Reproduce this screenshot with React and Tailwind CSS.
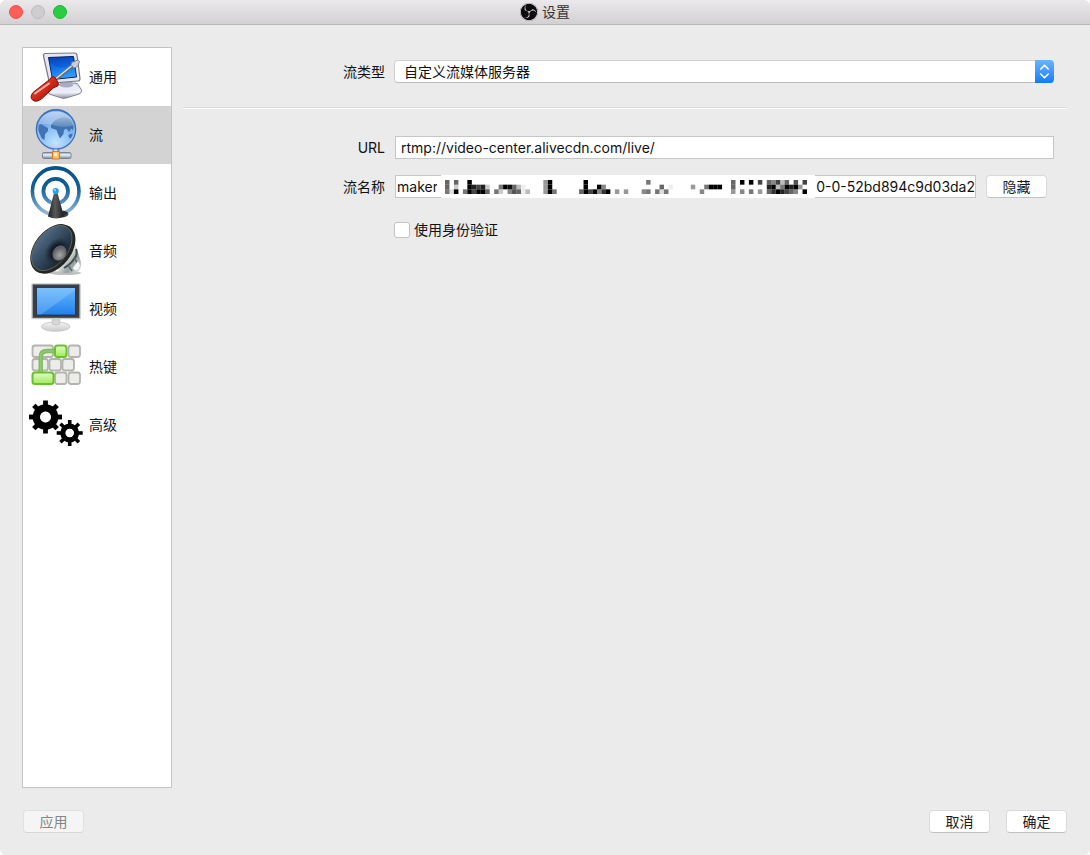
import { useState } from "react";
import { SiObsstudio } from "react-icons/si";

function ComputerIcon() {
  return (
    <svg width="54" height="54" viewBox="0 0 54 54" aria-hidden="true" className="shrink-0">
      <defs>
        <linearGradient id="pcScreen" x1="0" y1="0" x2="0.3" y2="1">
          <stop offset="0" stopColor="#0a3fae" />
          <stop offset="0.5" stopColor="#0b5fdc" />
          <stop offset="1" stopColor="#3ea6ff" />
        </linearGradient>
        <linearGradient id="pcBase" x1="0" y1="0" x2="0" y2="1">
          <stop offset="0" stopColor="#d5d8ea" />
          <stop offset="0.6" stopColor="#f4f5fc" />
          <stop offset="1" stopColor="#8f92a6" />
        </linearGradient>
        <linearGradient id="handle" x1="0" y1="0" x2="1" y2="1">
          <stop offset="0" stopColor="#ff8a76" />
          <stop offset="0.45" stopColor="#d92d1c" />
          <stop offset="1" stopColor="#7d0d06" />
        </linearGradient>
      </defs>
      <path d="M27 35 L46 33 Q49 33 50 36 L52.500 40 Q53 43 50 44 L37 48 Q34 49 31 47.500 L20 44 L19 41 Z" fill="url(#pcBase)" stroke="#83869a" strokeWidth="1" />
      <path d="M27 36.500 L46 35 L50 39.500 L35 43 L23 40 Z" fill="#e9ebf8" />
      <path d="M31 32 L43 31 L44 36 Q37 39 31 36 Z" fill="#a9acbf" />
      <path d="M16 3.500 L45.500 3 Q47.500 3 48 5 L51 28.500 Q51 31 49 31 L23 33 Q20.500 33 20 31 L14.500 6 Q14 4 16 3.500 Z" fill="#e6e7f0" stroke="#77798b" strokeWidth="1.200" />
      <path d="M19.500 7.500 L44.500 6.500 L47.500 27 L23.500 29.500 Z" fill="url(#pcScreen)" stroke="#08215c" strokeWidth="1" />
      <path d="M20.500 12 Q31 22 46 16 L47 26.500 L24 29 Z" fill="#188af5" opacity="0.35" />
      <path d="M27 29 L45 14.500" stroke="#636977" strokeWidth="3.400" />
      <path d="M27 28.500 L45 14" stroke="#dfe3ec" strokeWidth="1.600" />
      <path d="M42 14.500 Q42 11.500 45 11.500 L48.500 10 L50.500 11.500 L49 15.500 Q47 18.500 44.500 18 Z" fill="#c9ced8" stroke="#666b78" strokeWidth="0.800" />
      <path d="M22 27.500 Q24.500 25.500 26.500 28 L29.500 33.500 Q29.500 36.500 26.500 37 Q24 37.500 22 40 L13 48.500 Q7 53 3.500 50 Q0.500 47 4 42.500 L18 31.500 Q21.500 29.500 22 27.500 Z" fill="url(#handle)" stroke="#821006" strokeWidth="1" />
      <path d="M6 43.500 L20 33.500" stroke="#ffd0c8" strokeWidth="2" strokeLinecap="round" opacity="0.8" />
    </svg>
  );
}

function GlobeIcon() {
  return (
    <svg width="54" height="54" viewBox="0 0 54 54" aria-hidden="true" className="shrink-0">
      <defs>
        <radialGradient id="globeSea" cx="0.5" cy="0.85" r="0.9">
          <stop offset="0" stopColor="#c2e5ff" />
          <stop offset="0.45" stopColor="#8bbdf4" />
          <stop offset="1" stopColor="#3a76cf" />
        </radialGradient>
        <linearGradient id="globeGloss" x1="0" y1="0" x2="0" y2="1">
          <stop offset="0" stopColor="#ffffff" stopOpacity="0.65" />
          <stop offset="1" stopColor="#ffffff" stopOpacity="0.15" />
        </linearGradient>
        <linearGradient id="pipe" x1="0" y1="0" x2="0" y2="1">
          <stop offset="0" stopColor="#8995a8" />
          <stop offset="0.4" stopColor="#eef4fb" />
          <stop offset="1" stopColor="#75839a" />
        </linearGradient>
      </defs>
      <rect x="23.500" y="40" width="7" height="6" fill="#8e9bae" />
      <rect x="25" y="40" width="3" height="6" fill="#dfe7f1" />
      <rect x="13.500" y="44.500" width="28.500" height="6" rx="1.500" fill="url(#pipe)" stroke="#6b788d" strokeWidth="0.800" />
      <rect x="23.500" y="43.500" width="7" height="7.500" rx="0.800" fill="#ffc266" stroke="#e07a1c" strokeWidth="1.200" />
      <rect x="25" y="45" width="3" height="3" fill="#ffe9b8" />
      <circle cx="27" cy="21.300" r="19.700" fill="url(#globeSea)" stroke="#3c6db8" strokeWidth="1.200" />
      <path d="M9 16 Q12 15 15 18 L19 20 L19 23 L16 26 L15.500 32 Q12 31 11 26 L8.500 22 Z" fill="#3f74b3" />
      <path d="M22 17 Q26 10 34 9.500 Q42 9.500 44.500 15 Q46 20 44 22 L42.500 20.500 L40 24 L37.500 20.500 L35 22 L34.500 26 L31 30.500 L29 26 L27.500 22 L22 20 Z" fill="#3f74b3" />
      <path d="M39.500 27 Q42 25 44 26 L42 30.500 Q39.500 30.500 39.500 27 Z" fill="#3f74b3" />
      <path d="M9.500 17 Q12 4 27 3.500 Q42 4 45 17 Q36 21 24 17 Q16 15 9.500 17 Z" fill="url(#globeGloss)" />
      <circle cx="27" cy="21.300" r="18" fill="none" stroke="#a7d0fb" strokeWidth="1" opacity="0.6" />
    </svg>
  );
}

function AntennaIcon() {
  return (
    <svg width="54" height="54" viewBox="0 0 54 54" aria-hidden="true" className="shrink-0">
      <defs>
        <linearGradient id="wave" gradientUnits="userSpaceOnUse" x1="0" y1="0" x2="0" y2="50">
          <stop offset="0" stopColor="#07518a" />
          <stop offset="0.45" stopColor="#145f96" />
          <stop offset="1" stopColor="#9fc2dc" />
        </linearGradient>
        <linearGradient id="mast" x1="0" y1="0" x2="1" y2="0">
          <stop offset="0" stopColor="#1d1d1d" />
          <stop offset="0.45" stopColor="#5a5a5a" />
          <stop offset="1" stopColor="#1b1b1b" />
        </linearGradient>
      </defs>
      <circle cx="26.700" cy="25.200" r="23.300" fill="none" stroke="url(#wave)" strokeWidth="3.600" />
      <circle cx="26.700" cy="25.200" r="12.300" fill="none" stroke="url(#wave)" strokeWidth="3.800" />
      <ellipse cx="32" cy="48" rx="7.500" ry="3.500" fill="#000000" opacity="0.75" />
      <path d="M25 27 L28.500 27 L35 50.500 Q27 54.500 19 50.500 Z" fill="url(#mast)" />
      <circle cx="26.700" cy="25" r="3.100" fill="#2b9cf2" />
      <circle cx="26" cy="24.200" r="1.100" fill="#95d3ff" />
    </svg>
  );
}

function SpeakerIcon() {
  return (
    <svg width="54" height="54" viewBox="0 0 54 54" aria-hidden="true" className="shrink-0">
      <defs>
        <linearGradient id="coneFill" x1="0.5" y1="0" x2="0.4" y2="1">
          <stop offset="0" stopColor="#506b83" />
          <stop offset="0.5" stopColor="#33485c" />
          <stop offset="1" stopColor="#1b2632" />
        </linearGradient>
        <radialGradient id="coneDepth">
          <stop offset="0" stopColor="#0b0f16" />
          <stop offset="0.5" stopColor="#0f1620" stopOpacity="0.8" />
          <stop offset="1" stopColor="#1a2633" stopOpacity="0" />
        </radialGradient>
        <linearGradient id="magnet" x1="0" y1="0" x2="1" y2="1">
          <stop offset="0" stopColor="#56605f" />
          <stop offset="0.5" stopColor="#dfe5e5" />
          <stop offset="0.7" stopColor="#939e9e" />
          <stop offset="1" stopColor="#eef1f1" />
        </linearGradient>
        <radialGradient id="dustCap" cx="0.6" cy="0.6">
          <stop offset="0" stopColor="#aaa6a6" />
          <stop offset="1" stopColor="#606268" />
        </radialGradient>
      </defs>
      <ellipse cx="36" cy="49" rx="16" ry="2" fill="#000000" opacity="0.25" />
      <path d="M45 14 L48.500 27 L52 38 Q53 45 48 48 Q42 50 31 48.500 L26 43 Z" fill="url(#magnet)" />
      <path d="M47 25 Q49 31 45 35 Q42 40 35 44" fill="none" stroke="#424c4d" strokeWidth="2" />
      <path d="M39 41 L43 47 M45 34 L50 41" stroke="#59696a" strokeWidth="1.400" />
      <path d="M44 44 L49 37 L51 41 Q50 46 46 46.500 Z" fill="#f5f7f7" />
      <g transform="rotate(-52 24 25)">
        <ellipse cx="24" cy="24.800" rx="28" ry="18.500" fill="#262724" />
        <ellipse cx="24" cy="23.400" rx="25.800" ry="16" fill="url(#coneFill)" stroke="#76736a" strokeWidth="0.700" />
      </g>
      <ellipse cx="28" cy="27" rx="11" ry="15" fill="url(#coneDepth)" transform="rotate(38 28 27)" />
      <ellipse cx="30.500" cy="29" rx="6.500" ry="8" fill="url(#dustCap)" transform="rotate(35 30.500 29)" />
    </svg>
  );
}

function MonitorIcon() {
  return (
    <svg width="54" height="54" viewBox="0 0 54 54" aria-hidden="true" className="shrink-0">
      <defs>
        <linearGradient id="lcd" x1="0" y1="0" x2="0" y2="1">
          <stop offset="0" stopColor="#68b8fb" />
          <stop offset="1" stopColor="#2080ed" />
        </linearGradient>
        <linearGradient id="stand" x1="0" y1="0" x2="0" y2="1">
          <stop offset="0" stopColor="#f6f6f6" />
          <stop offset="1" stopColor="#c9c9c9" />
        </linearGradient>
      </defs>
      <ellipse cx="26.700" cy="44.600" rx="14.300" ry="4.700" fill="url(#stand)" stroke="#c2c2c2" strokeWidth="0.800" />
      <path d="M23 36 L31 36 L31 42 Q27 44.500 23 42 Z" fill="#d6d6d6" stroke="#b9b9b9" strokeWidth="0.500" />
      <rect x="2.300" y="1.300" width="49.500" height="36" rx="1.500" fill="#c9c9c9" />
      <rect x="3.700" y="2.500" width="46.700" height="33.300" fill="#3b3e42" />
      <rect x="7.500" y="5.500" width="39" height="27.500" fill="url(#lcd)" stroke="#19324f" strokeWidth="0.800" />
      <path d="M8 6 H46 V8 L12 32.500 H8 Z" fill="#b3dcff" opacity="0.28" />
    </svg>
  );
}

const GREY_KEYS = [
  [3.5, 5.5, 20.5],
  [39.5, 5.5, 11.5],
  [3.5, 19, 15.5],
  [20.5, 19, 11.5],
  [33.5, 19, 11.5],
  [26, 32.5, 11.5],
  [39.5, 32.5, 11.5],
];

function KeysIcon() {
  return (
    <svg width="54" height="54" viewBox="0 0 54 54" aria-hidden="true" className="shrink-0">
      <defs>
        <linearGradient id="greenKey" x1="0" y1="0" x2="0" y2="1">
          <stop offset="0" stopColor="#e2fbc8" />
          <stop offset="1" stopColor="#a0ea5c" />
        </linearGradient>
      </defs>
      {GREY_KEYS.map(([x, y, w]) => (
        <rect key={`${x}-${y}`} x={x} y={y} width={w} height="11.500" rx="2.500" fill="#ececea" stroke="#b3b4b0" strokeWidth="1.800" />
      ))}
      <path d="M11.700 32 V17 Q11.700 11 18 11 H26" fill="none" stroke="#7fbd58" strokeWidth="4.400" />
      <path d="M11.700 32 V17 Q11.700 11 18 11 H26" fill="none" stroke="#94c878" strokeWidth="1.600" />
      <rect x="26" y="5.500" width="11.500" height="11.500" rx="2.500" fill="url(#greenKey)" stroke="#6cc02e" strokeWidth="2" />
      <rect x="3.500" y="32.500" width="21" height="11.500" rx="2.500" fill="url(#greenKey)" stroke="#6cc02e" strokeWidth="2" />
    </svg>
  );
}

const TEETH = [0, 45, 90, 135, 180, 225, 270, 315];

function Gear({ cx, cy, outer, body, hole, tooth }) {
  return (
    <g>
      {TEETH.map((angle) => (
        <rect key={angle} x={cx - tooth / 2} y={cy - outer} width={tooth} height={outer - hole} transform={`rotate(${angle} ${cx} ${cy})`} fill="#000000" />
      ))}
      <circle cx={cx} cy={cy} r={(body + hole) / 2} fill="none" stroke="#000000" strokeWidth={body - hole} />
      <circle cx={cx} cy={cy} r={hole} fill="#ffffff" />
    </g>
  );
}

function GearsIcon() {
  return (
    <svg width="54" height="54" viewBox="0 0 54 54" aria-hidden="true" className="shrink-0">
      <Gear cx={16.5} cy={19} outer={16.5} body={12.8} hole={5.4} tooth={4.8} />
      <Gear cx={40.7} cy={35} outer={13} body={9.4} hole={4.2} tooth={3.6} />
    </svg>
  );
}

const SECTIONS = [
  { label: "通用", Icon: ComputerIcon },
  { label: "流", Icon: GlobeIcon },
  { label: "输出", Icon: AntennaIcon },
  { label: "音频", Icon: SpeakerIcon },
  { label: "视频", Icon: MonitorIcon },
  { label: "热键", Icon: KeysIcon },
  { label: "高级", Icon: GearsIcon },
];

// Darkness (0-f) of the blocks that hide the middle of the stream key: column -> three rows.
const BLOCKS = {
  0: "998", 1: "002", 2: "93f", 4: "008", 5: "fff", 6: "0db", 7: "0bf", 8: "0df", 9: "039",
  11: "008", 12: "083", 13: "0f0", 14: "0e7", 15: "09a", 16: "049", 17: "011", 18: "004",
  22: "666", 23: "fff", 24: "008", 30: "009", 31: "fff", 32: "00b", 33: "00f", 34: "0f7",
  35: "07c", 36: "00f", 38: "006", 40: "006", 44: "007", 45: "808", 47: "008", 48: "092",
  49: "008", 50: "010", 55: "060", 57: "007", 58: "080", 59: "0f0", 60: "0f0", 61: "0f0",
  64: "996", 66: "f07", 68: "f08", 70: "b06", 72: "9d9", 73: "7fc", 74: "b4f", 75: "48d",
  76: "9fb", 77: "0d9", 78: "af7", 79: "060", 80: "b0f",
};

function Mosaic() {
  return (
    <svg width="362" height="14" viewBox="0 0 81 3" preserveAspectRatio="none" aria-hidden="true">
      {Object.entries(BLOCKS).flatMap(([column, rows]) =>
        [...rows].map((level, row) =>
          level === "0" ? null : (
            <rect key={`${column}-${row}`} x={column} y={row} width="1" height="1" fill="#000000" fillOpacity={parseInt(level, 16) / 15} />
          ),
        ),
      )}
    </svg>
  );
}

function PushButton({ children, disabled }) {
  return (
    <button
      type="button"
      disabled={disabled}
      className="h-[23px] w-[61px] shrink-0 rounded-[4px] border border-[#dadada] border-b-[#c2c2c2] bg-white text-sm leading-5 text-[#1a1a1a] disabled:border-[#e0e0e0] disabled:border-b-[#d6d6d6] disabled:bg-[#f5f5f5] disabled:text-[#868686]"
    >
      {children}
    </button>
  );
}

export default function App() {
  const [section, setSection] = useState("流");
  const [url, setUrl] = useState("rtmp://video-center.alivecdn.com/live/");
  const [keyStart, setKeyStart] = useState("maker");
  const [keyEnd, setKeyEnd] = useState("0-0-52bd894c9d03da2");

  return (
    <div className="bg-white font-['Inter','Noto_Sans_CJK_SC',sans-serif] text-sm leading-5 text-[#111111]">
      <div className="flex min-h-screen flex-col overflow-hidden rounded-[6px] bg-[#ebebeb]">
        <header className="grid h-[25px] shrink-0 grid-cols-[1fr_auto_1fr] items-center border-b border-[#b9b7b9] bg-linear-to-b from-[#ebe9eb] to-[#d2d0d2] px-[9px]">
          <div className="flex gap-2">
            <button type="button" aria-label="关闭" className="size-[14px] rounded-full border border-[#f04e48] bg-[#ff5f57]" />
            <button type="button" aria-label="最小化" disabled className="size-[14px] rounded-full border border-[#bdbbbd] bg-[#cfcdcf]" />
            <button type="button" aria-label="缩放" className="size-[14px] rounded-full border border-[#20b833] bg-[#28cd41]" />
          </div>
          <h1 className="flex items-center gap-1 text-[#333333]">
            <span className="rounded-full bg-[#0c0b0d]">
              <SiObsstudio size={18} color="#dfdddf" aria-hidden="true" />
            </span>
            设置
          </h1>
        </header>

        <main className="flex flex-1 gap-[11px] pt-[22px] pr-[23px] pl-[22px]">
          <nav className="w-[150px] shrink-0 border border-[#c4c4c4] bg-white">
            {SECTIONS.map(({ label, Icon }) => (
              <button
                key={label}
                type="button"
                aria-current={section === label ? "page" : undefined}
                onClick={() => setSection(label)}
                className="flex h-[58px] w-full items-center gap-1.5 pl-1.5 text-left aria-[current=page]:bg-[#d3d3d3]"
              >
                <Icon />
                {label}
              </button>
            ))}
          </nav>

          <form className="min-w-0 flex-1 pt-[13px]">
            <div className="flex items-center gap-[9px] pr-[13px]">
              <label htmlFor="type" className="w-[202px] shrink-0 text-right">流类型</label>
              <div className="relative min-w-0 flex-1">
                <select id="type" className="block h-[23px] w-full appearance-none rounded-[4px] border border-[#d2d2d2] border-b-[#bcbcbc] bg-white pr-6 pl-[9px] leading-5">
                  <option>自定义流媒体服务器</option>
                </select>
                <span className="pointer-events-none absolute top-0 right-0 flex h-[23px] w-[19px] items-center justify-center rounded-r-[4px] bg-linear-to-b from-[#6bb3fa] to-[#0a7aff]">
                  <svg width="11" height="15" viewBox="0 0 11 15" fill="none" stroke="#ffffff" strokeWidth="1.600" strokeLinecap="round" strokeLinejoin="round" aria-hidden="true">
                    <path d="M1.800 5 L5.500 1.200 L9.200 5 M1.800 10 L5.500 13.800 L9.200 10" />
                  </svg>
                </span>
              </div>
            </div>

            <hr className="mt-6 h-[2px] border-t border-b border-t-[#dadada] border-b-[#fafafa]" />

            <div className="mt-[27px] flex items-center gap-[10px] pr-[13px]">
              <label htmlFor="url" className="w-[202px] shrink-0 text-right">URL</label>
              <input id="url" type="text" value={url} onChange={(event) => setUrl(event.target.value)} className="h-[23px] min-w-0 flex-1 border border-[#c6c6c6] bg-white px-[5px]" />
            </div>

            <div className="mt-4 flex items-center gap-[10px] pr-5">
              <label htmlFor="key-start" className="w-[202px] shrink-0 text-right">流名称</label>
              <div className="flex min-w-0 flex-1 items-center">
                <input id="key-start" type="text" value={keyStart} onChange={(event) => setKeyStart(event.target.value)} className="h-[23px] w-[46px] shrink-0 border border-r-0 border-[#c6c6c6] bg-white pr-1 pl-px" />
                <div className="flex h-[23px] w-[374px] shrink-0 items-center bg-white pl-1">
                  <Mosaic />
                </div>
                <input type="text" aria-label="流名称" value={keyEnd} onChange={(event) => setKeyEnd(event.target.value)} className="h-[23px] min-w-0 flex-1 border border-l-0 border-[#c6c6c6] bg-white text-right" />
              </div>
              <PushButton>隐藏</PushButton>
            </div>

            <div className="mt-[22px] flex items-center gap-1 pl-[211px]">
              <input id="auth" type="checkbox" className="size-4 appearance-none rounded-[3px] border border-[#c2c2c2] bg-white checked:bg-[#0a7aff]" />
              <label htmlFor="auth">使用身份验证</label>
            </div>
          </form>
        </main>

        <footer className="flex items-center gap-4 py-[22px] pr-[23px] pl-[23px]">
          <PushButton disabled>应用</PushButton>
          <div className="ml-auto flex gap-4">
            <PushButton>取消</PushButton>
            <PushButton>确定</PushButton>
          </div>
        </footer>
      </div>
    </div>
  );
}
